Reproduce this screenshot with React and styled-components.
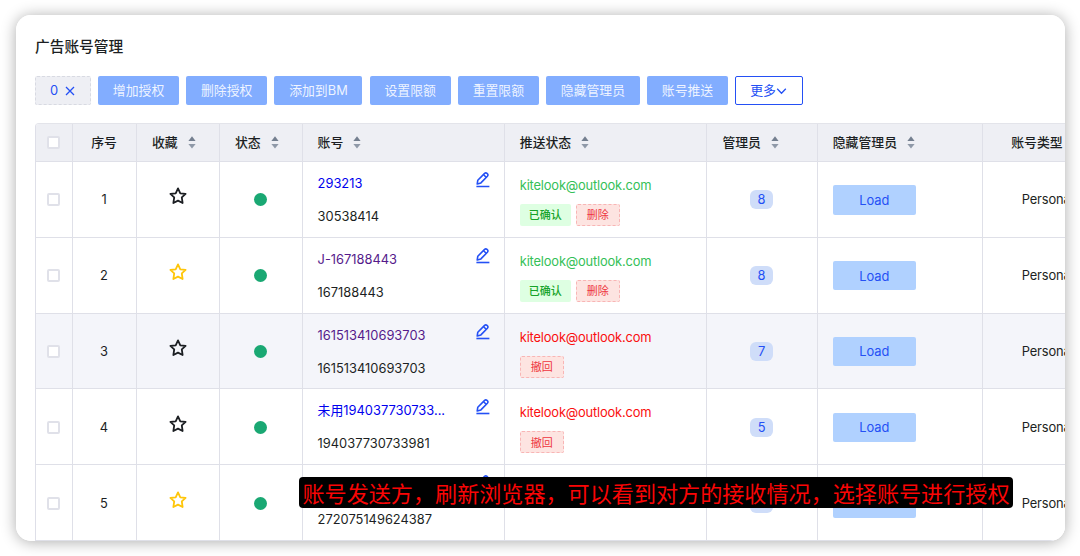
import React from 'react';
import styled, { createGlobalStyle } from 'styled-components';

const GlobalStyle = createGlobalStyle`
  * {
    box-sizing: border-box;
  }

  body {
    margin: 0;
    background: #fff;
    overflow: hidden;
    font-family: Inter, 'Noto Sans CJK SC', sans-serif;
    font-size: 12.86px;
    color: #1c1f23;
  }
`;

const Page = styled.div`
  height: 556px;
  padding: 15px 15px 15px 16px;
  overflow: hidden;
`;

const Card = styled.main`
  position: relative;
  height: 526px;
  padding-left: 19px;
  overflow: hidden;
  background: #fff;
  border-radius: 15px;
`;

const Shadow = styled.div`
  border-radius: 15px;
  box-shadow: 0 1px 15px rgba(0, 0, 0, 0.33);
`;

const Title = styled.h1`
  margin: 0;
  padding-top: 21px;
  font-size: 14.7px;
  line-height: 22px;
  font-weight: 500;
`;

const Toolbar = styled.div`
  display: flex;
  gap: 7.35px;
  margin-top: 17.6px;
`;

const Button = styled.button`
  display: flex;
  align-items: center;
  height: 29.4px;
  padding: 1px 14.7px 0;
  border: 0;
  border-radius: 2px;
  background: #82adff;
  color: rgba(255, 255, 255, 0.88);
  font: inherit;
  line-height: 20px;
  white-space: nowrap;
`;

const CountButton = styled(Button)`
  width: 55.8px;
  gap: 7px;
  padding: 1px 0 0 14px;
  border: 1px dashed #d8dae2;
  background: #eeeff4;
  color: #2450f5;
`;

const MoreButton = styled(Button)`
  width: 68px;
  padding: 1px 0 0 14px;
  border: 1px solid #2450f5;
  background: #fff;
  color: #2450f5;
`;

const Table = styled.div`
  width: 1110px;
  margin-top: 18px;
  border-top: 1px solid #e3e4ea;
  border-left: 1px solid #dedfe8;
  border-top-left-radius: 4px;
  overflow: hidden;
`;

const Row = styled.div`
  display: grid;
  grid-template-columns: 37px 64px 83px 82.6px 202.2px 202.6px 110.4px 165.5px 1fr;
  height: 75.8px;
  background: ${(p) => (p.$active ? '#f4f5fa' : '#fff')};
`;

const HeadRow = styled(Row)`
  height: 38px;
  background: #eeeff4;
  font-weight: 500;
`;

const Cell = styled.div`
  display: flex;
  align-items: center;
  justify-content: ${(p) => (p.$center ? 'center' : 'flex-start')};
  padding: ${(p) => (p.$center ? '1px 1px 0 0' : '1px 14.7px 0 15px')};
  border-right: 1px solid #dfe0e8;
  border-bottom: 1px solid #dfe0e8;
  white-space: nowrap;
`;

const HeadCell = styled(Cell)`
  gap: 10px;
  line-height: 20px;
`;

const TypeHead = styled(HeadCell)`
  padding-left: 28px;
`;

const TypeCell = styled(Cell)`
  padding-left: 38.5px;
  letter-spacing: -0.15px;
`;

const Checkbox = styled.span`
  width: 13px;
  height: 13px;
  border: 2px solid #e0e1e9;
  border-radius: 2px;
  background: #fff;
`;

const Dot = styled.span`
  width: 13px;
  height: 13px;
  border-radius: 50%;
  background: #1aa873;
`;

const StarBox = styled.span`
  display: flex;
  margin-top: -7px;
  color: ${(p) => (p.$on ? '#ffc60a' : '#1c1f23')};
`;

const AccountCell = styled(Cell)`
  align-items: flex-start;
  justify-content: space-between;
  padding-top: 12px;
  padding-right: 13.5px;
`;

const AccountText = styled.div`
  line-height: 20px;
`;

const AccountLink = styled.div`
  margin-bottom: 13px;
  color: ${(p) => (p.$visited ? '#551a8b' : '#0000ee')};
`;

const EditIcon = styled.svg`
  margin-top: -2px;
`;

const PushCell = styled(Cell)`
  flex-direction: column;
  align-items: flex-start;
  justify-content: flex-start;
  padding-top: 14px;
`;

const Mail = styled.div`
  line-height: 20px;
  letter-spacing: -0.17px;
  color: ${(p) => (p.$accepted ? '#35bf58' : '#fa0f0f')};
`;

const Tags = styled.div`
  display: flex;
  gap: 5px;
  margin-top: 8px;
`;

const Tag = styled.span`
  display: flex;
  align-items: center;
  justify-content: center;
  width: ${(p) => (p.$ok ? '51px' : '44px')};
  height: 22px;
  padding-bottom: 1px;
  border: ${(p) => (p.$ok ? '0' : '1px dashed #f8b5b5')};
  border-radius: 2px;
  background: ${(p) => (p.$ok ? '#deffe2' : '#fde4e1')};
  color: ${(p) => (p.$ok ? '#16a32a' : '#ee3540')};
  font-size: 11px;
  font-weight: ${(p) => (p.$ok ? 500 : 400)};
`;

const Badge = styled.span`
  width: 23px;
  height: 19px;
  border-radius: 6px;
  background: #cfddf9;
  color: #2450f5;
  line-height: 19px;
  text-align: center;
`;

const LoadButton = styled.button`
  width: 83px;
  height: 29.4px;
  padding: 1px 0 0;
  border: 0;
  border-radius: 2px;
  background: #b0d1ff;
  color: #2450f5;
  font: inherit;
`;

const Caption = styled.div`
  position: absolute;
  left: 283px;
  top: 462px;
  width: 714px;
  height: 31px;
  border-radius: 4px;
  background: #000;
  color: #fa0505;
  font-family: 'Noto Sans CJK SC', sans-serif;
  font-size: 22.1px;
  line-height: 30px;
  text-align: center;
  white-space: nowrap;
`;

const actions = ['增加授权', '删除授权', '添加到BM', '设置限额', '重置限额', '隐藏管理员', '账号推送'];

const sortable = ['收藏', '状态', '账号', '推送状态', '管理员', '隐藏管理员'];

const rows = [
  { name: '293213', id: '30538414', accepted: true, admins: 8 },
  { name: 'J-167188443', id: '167188443', visited: true, starred: true, accepted: true, admins: 8 },
  { name: '161513410693703', id: '161513410693703', visited: true, admins: 7, active: true },
  { name: '未用194037730733...', id: '194037730733981', admins: 5 },
  { name: '272075149624387', id: '272075149624387', starred: true, admins: 5, noPush: true },
];

const Sorter = () => (
  <svg width="8" height="13" viewBox="0 0 8 13">
    <path d="M4 0.3 7.6 5H0.4z" fill="#747f8f" />
    <path d="M4 12.5 7.6 8H0.4z" fill="#8f99a8" />
  </svg>
);

const Star = ({ on }) => (
  <StarBox $on={on}>
    <svg width="18" height="18" viewBox="0 0 18 18" fill="none" stroke="currentColor" strokeWidth="1.8" strokeLinejoin="round">
      <path d="M9 1.4 11.3 6.3 16.6 6.9 12.8 10.4 13.6 16 9 13.6 4.4 16 5.2 10.4 1.4 6.9 6.7 6.3z" />
    </svg>
  </StarBox>
);

const Edit = () => (
  <EditIcon width="14" height="16" viewBox="0 0 14 16" fill="none" stroke="#2450f5" strokeWidth="1.6" strokeLinejoin="round">
    <path d="M1.2 12 1.8 8.2 8.6 1.4Q9.8 .4 11 1.4L11.4 1.8Q12.5 3 11.4 4.2L4.9 10.9Z" />
    <path d="M7.6 2.7 10.2 5.3" />
    <path d="M.4 14.5H13.4" />
  </EditIcon>
);

function App() {
  return (
    <Page>
      <GlobalStyle />
      <Shadow>
        <Card>
          <Title>广告账号管理</Title>
          <Toolbar>
            <CountButton>
              0
              <svg width="10" height="10" viewBox="0 0 10 10" stroke="currentColor" strokeWidth="1.3">
                <path d="M1 1 9 9M9 1 1 9" />
              </svg>
            </CountButton>
            {actions.map((label) => (
              <Button key={label}>{label}</Button>
            ))}
            <MoreButton>
              更多
              <svg width="11" height="8" viewBox="0 0 11 8" fill="none" stroke="currentColor" strokeWidth="1.3">
                <path d="M1.2 1.8 5.5 6.2 9.8 1.8" />
              </svg>
            </MoreButton>
          </Toolbar>
          <Table>
            <HeadRow>
              <HeadCell $center><Checkbox /></HeadCell>
              <HeadCell $center>序号</HeadCell>
              {sortable.map((label) => (
                <HeadCell key={label}>
                  {label}
                  <Sorter />
                </HeadCell>
              ))}
              <TypeHead>账号类型</TypeHead>
            </HeadRow>
            {rows.map((row, i) => (
              <Row key={row.id} $active={row.active}>
                <Cell $center><Checkbox /></Cell>
                <Cell $center>{i + 1}</Cell>
                <Cell $center><Star on={row.starred} /></Cell>
                <Cell $center><Dot /></Cell>
                <AccountCell>
                  <AccountText>
                    <AccountLink $visited={row.visited}>{row.name}</AccountLink>
                    {row.id}
                  </AccountText>
                  <Edit />
                </AccountCell>
                <PushCell>
                  {!row.noPush && (
                    <>
                      <Mail $accepted={row.accepted}>kitelook@outlook.com</Mail>
                      <Tags>
                        {row.accepted && <Tag $ok>已确认</Tag>}
                        <Tag>{row.accepted ? '删除' : '撤回'}</Tag>
                      </Tags>
                    </>
                  )}
                </PushCell>
                <Cell $center><Badge>{row.admins}</Badge></Cell>
                <Cell><LoadButton>Load</LoadButton></Cell>
                <TypeCell>Personal</TypeCell>
              </Row>
            ))}
          </Table>
          <Caption>账号发送方，刷新浏览器，可以看到对方的接收情况，选择账号进行授权</Caption>
        </Card>
      </Shadow>
    </Page>
  );
}

export default App;
